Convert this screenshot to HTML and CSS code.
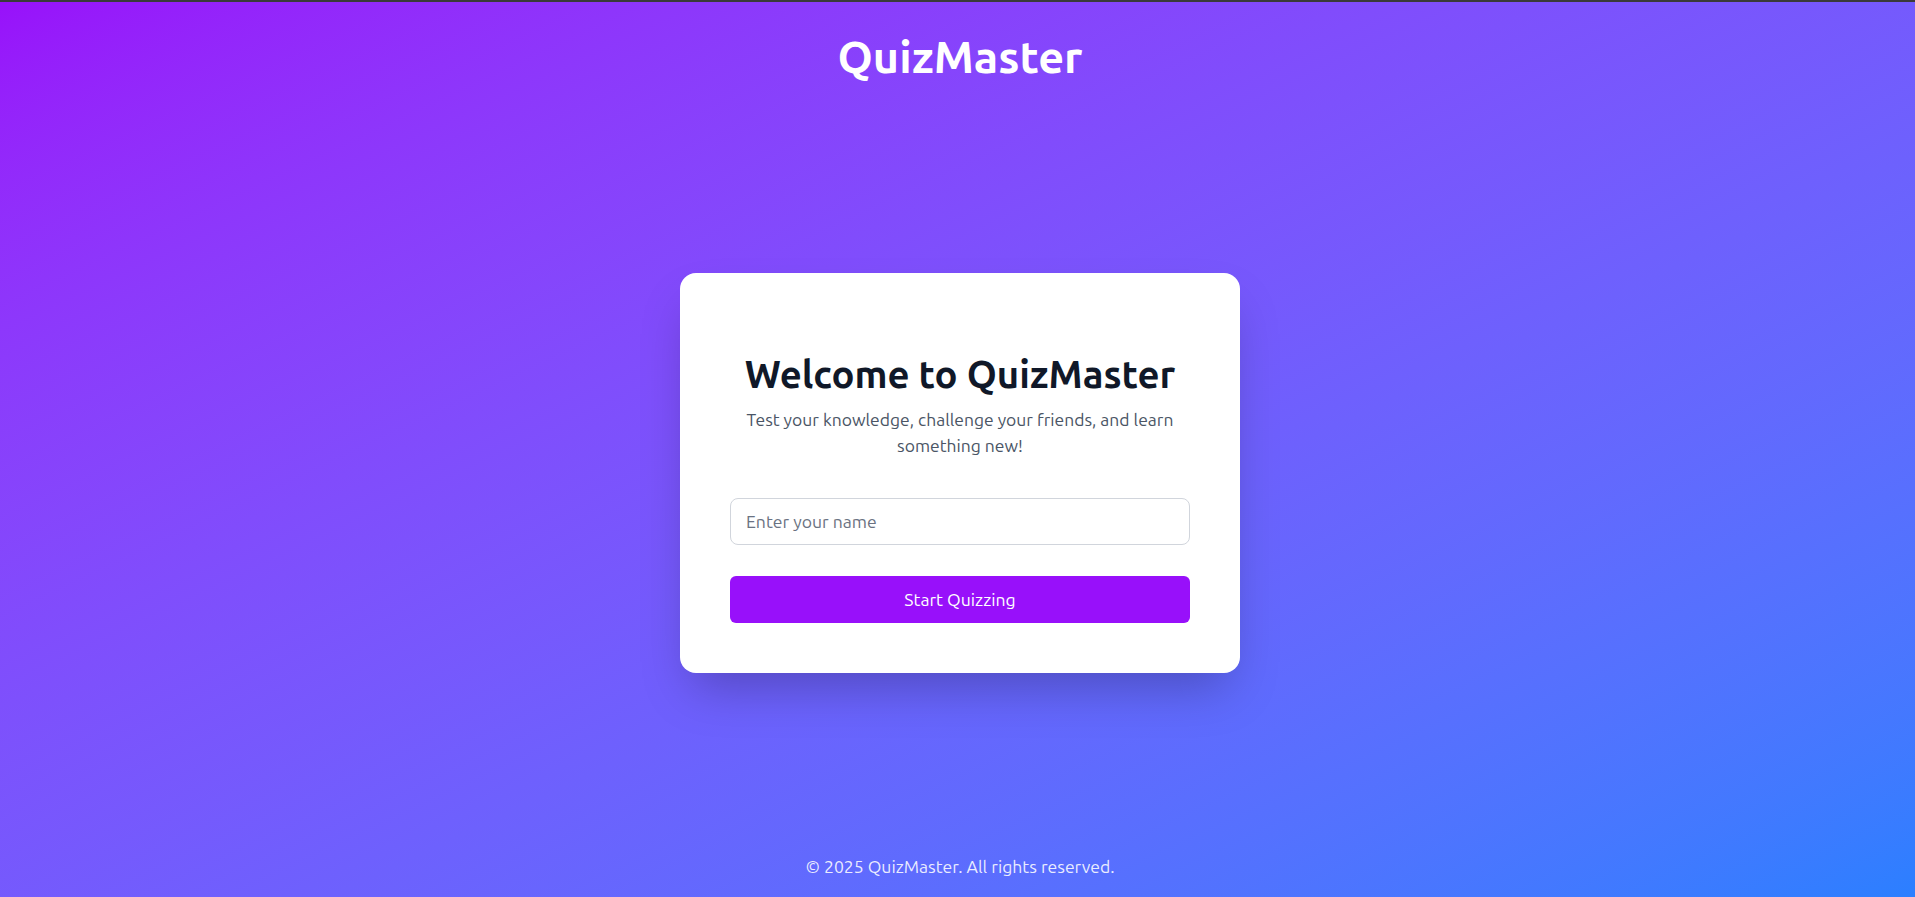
FILE: index.html
```html
<!DOCTYPE html>
<html lang="en">
<head>
<meta charset="utf-8">
<title>QuizMaster</title>
<link rel="stylesheet" href="styles.css">
</head>
<body>
<div class="page">
  <header class="site-header">
    <h1 class="brand">QuizMaster</h1>
  </header>
  <main class="main">
    <section class="card">
      <h2 class="card-title">Welcome to QuizMaster</h2>
      <p class="card-sub">Test your knowledge, challenge your friends, and learn something new!</p>
      <form class="form">
        <input class="name-input" type="text" placeholder="Enter your name">
        <button class="start-btn" type="button">Start Quizzing</button>
      </form>
    </section>
  </main>
  <footer class="site-footer">
    <p class="copy">© 2025 QuizMaster. All rights reserved.</p>
  </footer>
</div>
</body>
</html>
```

FILE: styles.css
```css
* { box-sizing: border-box; }
html, body { margin: 0; padding: 0; height: 100%; }
body {
  font-family: "Ubuntu", "Open Sans", "Noto Sans", sans-serif;
  border-top: 2px solid #3a3a3a;
  background: linear-gradient(to bottom right in oklab, #9810fa, #2b7fff);
  min-height: 100vh;
}
.page {
  min-height: calc(100vh - 2px);
  display: flex;
  flex-direction: column;
  padding-left: 5px;
}
.site-header {
  padding: 22px 0 16px;
  text-align: center;
}
.brand {
  margin: 0;
  color: #fff;
  font-size: 45px;
  font-weight: 700;
  line-height: 66px;
}
.main {
  flex: 1;
  display: flex;
  align-items: center;
  justify-content: center;
}
.card {
  width: 560px;
  background: #fff;
  border-radius: 16px;
  padding: 78px 50px 50px;
  text-align: center;
  box-shadow: 0 25px 50px -12px rgba(0, 0, 0, 0.25);
}
.card-title {
  margin: 0;
  font-size: 38.3px;
  font-weight: 700;
  line-height: 46px;
  color: #101828;
}
.card-sub {
  margin: 10px 0 0;
  font-size: 17.5px;
  line-height: 26px;
  color: #4a5565;
}
.form {
  margin-top: 39px;
  display: flex;
  flex-direction: column;
  gap: 31px;
}
.name-input {
  height: 47px;
  width: 100%;
  border: 1px solid #d1d5dc;
  border-radius: 8px;
  padding: 0 15px;
  font-family: inherit;
  font-size: 17.6px;
  color: #101828;
  outline: none;
}
.name-input::placeholder { color: #6a7282; }
.start-btn {
  height: 47px;
  width: 100%;
  border: 0;
  border-radius: 6px;
  background: #9810fa;
  color: #fff;
  font-family: inherit;
  font-size: 17.6px;
  cursor: pointer;
}
.site-footer {
  padding: 14px 0 17px;
  text-align: center;
}
.copy {
  margin: 0;
  font-size: 17.6px;
  line-height: 26px;
  color: rgba(255, 255, 255, 0.88);
}
```
